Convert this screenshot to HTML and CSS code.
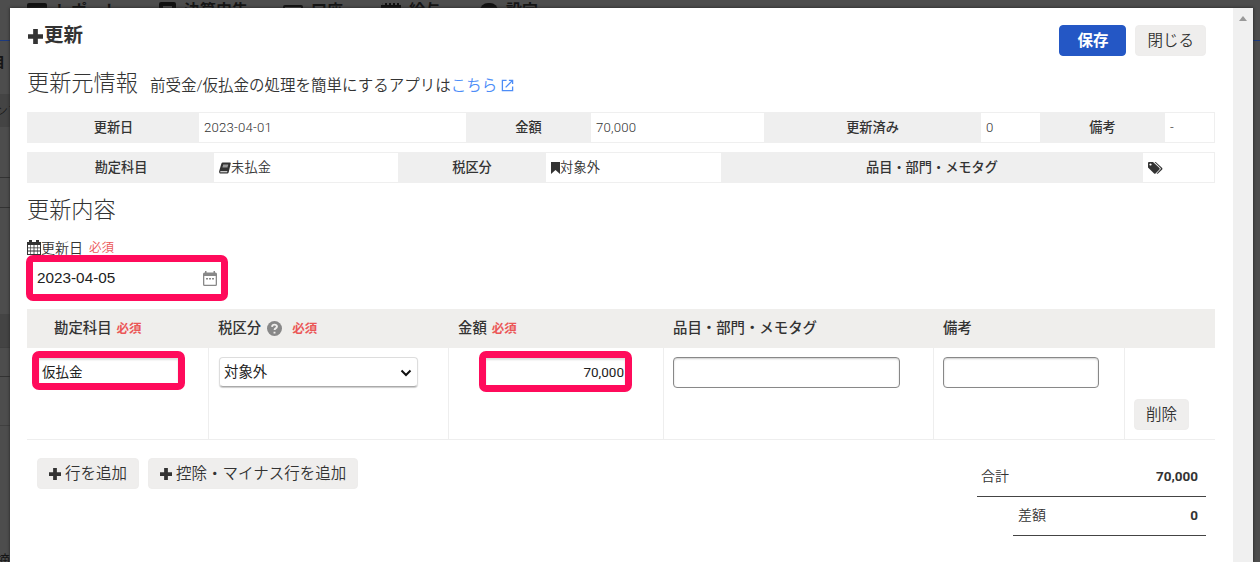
FILE: index.html
```html
<!DOCTYPE html>
<html lang="ja">
<head>
  <meta charset="UTF-8">
  <meta name="viewport" content="width=device-width, initial-scale=1.0">
  <title>更新</title>
  <link rel="stylesheet" href="styles.css">
</head>
<body>

<!-- Shared icons -->
<svg class="sprite" aria-hidden="true">
  <symbol id="plus" viewBox="0 0 16 16"><path d="M5.500 0h5v5.500H16v5h-5.500V16h-5v-5.500H0v-5h5.500z"/></symbol>
  <symbol id="calendar" viewBox="0 0 14 15"><path fill-rule="evenodd" d="M0 2h2V0h3v2h4V0h3v2h2v13H0zM1 5v2.400h2.400V5zm3 0v2.400h2.600V5zm3.400 0v2.400H10V5zm3.200 0v2.400H13V5zM1 8.200v2.400h2.400V8.200zm3 0v2.400h2.600V8.200zm3.400 0v2.400H10V8.200zm3.200 0v2.400H13V8.200zM1 11.400V14h2.400v-2.600zm3 0V14h2.600v-2.600zm3.400 0V14H10v-2.600zm3.200 0V14H13v-2.600z"/></symbol>
</svg>

<!-- Page behind the modal -->
<div class="page">
  <nav class="page-nav">
    <span class="nav-item nav-report"><i class="nav-icon"></i>レポート</span>
    <span class="nav-item nav-close"><i class="nav-icon book"></i>決算申告</span>
    <span class="nav-item nav-account"><i class="nav-icon outline"></i>口座</span>
    <span class="nav-item nav-salary"><i class="nav-icon receipt"></i>給与</span>
    <span class="nav-item nav-setting"><i class="nav-icon gear"></i>設定</span>
  </nav>
  <div class="page-side">
    <p class="side-title">目</p>
    <p class="side-row side-staff">ンプ</p>
    <p class="side-row side-line"></p>
    <p class="side-row side-gap"></p>
    <p class="side-row side-shade"></p>
    <p class="side-row side-line2"></p>
    <p class="side-row side-line3"></p>
    <p class="side-end">摘</p>
  </div>
</div>

<div class="modal">
  <div class="modal-body">
    <header class="modal-header">
      <h1><svg class="icon-title"><use href="#plus"/></svg>更新</h1>
      <div class="header-buttons">
        <button class="btn btn-primary">保存</button>
        <button class="btn">閉じる</button>
      </div>
    </header>

    <h2 class="source-title">更新元情報
      <small>前受金/仮払金の処理を簡単にするアプリは<a>こちら<svg class="icon-link" viewBox="0 0 14 14"><path d="M6 1.500H1.500v11h11V8M8.500 1.500h4v4M12.500 1.500L5 9"/></svg></a></small>
    </h2>

    <dl class="info info-first">
      <dt>更新日</dt><dd>2023-04-01</dd>
      <dt>金額</dt><dd>70,000</dd>
      <dt>更新済み</dt><dd>0</dd>
      <dt>備考</dt><dd>-</dd>
    </dl>
    <dl class="info info-second">
      <dt>勘定科目</dt>
      <dd><svg class="icon-book" viewBox="0 0 13 12"><path fill-rule="evenodd" d="M4 0h8q1 0 .7 1L10.500 10.500Q10 12 9 12H1Q-.3 11 .3 9L2.500 1.500Q3 0 4 0zM4.500 2.500L4.300 3.300h5.500L10 2.500zM4 4.500l-.2.800h5.500l.2-.800zM1.500 9.500L1.300 10.500h7.500l.3-1z"/></svg>未払金</dd>
      <dt>税区分</dt>
      <dd><svg class="icon-bookmark" viewBox="0 0 9 12"><path d="M0 0h9v12L4.500 8 0 12z"/></svg>対象外</dd>
      <dt>品目・部門・メモタグ</dt>
      <dd><svg class="icon-tags" viewBox="0 0 15 12"><path fill-rule="evenodd" d="M0 1q0-1 1-1h4l6.500 6q.5.700 0 1.400L7.500 11.500q-.7.500-1.400 0L0 5.500zM2.500 1.400a1.100 1.100 0 1 0 .01 0z"/><path d="M6.500 0h1.200l6.500 6q.5.700 0 1.400L10 11.500q-.7.500-1.400 0l4-4.200q.4-.600 0-1.300z"/></svg></dd>
    </dl>

    <h2 class="content-title">更新内容</h2>

    <label class="date-label"><svg class="icon-calendar"><use href="#calendar"/></svg>更新日 <em>必須</em></label>
    <div class="field highlight date-field">
      <span>2023-04-05</span>
      <svg class="icon-picker" viewBox="0 0 14 15"><path fill-rule="evenodd" d="M2 0h1.500v1.500h7V0H12v1.500h.5Q14 1.500 14 3v10.500Q14 15 12.500 15h-11Q0 15 0 13.500V3q0-1.500 1.500-1.500H2zM1.300 5v8.200q0 .5.500.5h10.400q.5 0 .5-.5V5z"/><path d="M3 7h2v1.500H3zM6 7h2v1.500H6zM9 7h2v1.500H9z"/></svg>
    </div>

    <div class="lines">
      <div class="lines-head">
        <div class="head-account">勘定科目<em>必須</em></div>
        <div>税区分<svg class="icon-help" viewBox="0 0 14 14"><circle cx="7" cy="7" r="7"/><path d="M4.700 5.400q.2-2 2.300-2t2.300 1.800q0 1-1.200 1.700-1 .6-1 1.500M7 10v1.600"/></svg><em class="tax-required">必須</em></div>
        <div>金額<em>必須</em></div>
        <div>品目・部門・メモタグ</div>
        <div>備考</div>
        <div></div>
      </div>
      <div class="lines-row">
        <div class="cell-account"><div class="field highlight account-field">仮払金</div></div>
        <div class="cell-tax"><div class="select">対象外<svg class="icon-chevron" viewBox="0 0 12 8"><path d="M1.500 1.500L6 6l4.500-4.500"/></svg></div></div>
        <div class="cell-amount"><div class="field highlight amount-field">70,000</div></div>
        <div><div class="input"></div></div>
        <div><div class="input memo"></div></div>
        <div class="cell-delete"><button class="btn">削除</button></div>
      </div>
    </div>

    <footer class="modal-footer">
      <div class="add-buttons">
        <button class="btn"><svg class="icon-plus"><use href="#plus"/></svg>行を追加</button>
        <button class="btn"><svg class="icon-plus"><use href="#plus"/></svg>控除・マイナス行を追加</button>
      </div>
      <div class="totals">
        <div class="total"><span>合計</span><b>70,000</b></div>
        <div class="total diff"><span>差額</span><b>0</b></div>
      </div>
    </footer>
  </div>
  <div class="scrollbar"><i></i></div>
</div>

</body>
</html>
```
FILE: styles.css
```css
* {
  box-sizing: border-box;
}

body {
  margin: 0;
  height: 562px;
  overflow: hidden;
  background: #4d4d4d;
  color: #333;
  font: 14px/20px Roboto, "Noto Sans CJK JP", sans-serif;
}

h1, h2, p, dl, dd {
  margin: 0;
}

em {
  color: #eb5757;
  font-style: normal;
  font-size: 12.500px;
}

svg {
  fill: #333;
}

.sprite {
  display: none;
}

/* Dimmed page */
.page {
  position: absolute;
  inset: 0;
  overflow: hidden;
  color: #151515;
}

.page-nav {
  height: 41px;
  border-bottom: 1px solid #1c3a80;
}

.nav-item {
  position: absolute;
  top: 1px;
  display: flex;
  gap: 8px;
  font-size: 16px;
  font-weight: bold;
}

.nav-report { left: 27px; }
.nav-close { left: 159px; }
.nav-account { left: 283px; }
.nav-salary { left: 381px; }
.nav-setting { left: 480px; }

.nav-icon {
  width: 20px;
  height: 16px;
  margin-top: 2px;
  border-radius: 2px;
  background: #111;
}

.nav-icon.book {
  width: 17px;
  margin-top: 1px;
  background: none;
  border: 4px solid #111;
}

.nav-icon.outline {
  margin-top: 4px;
  background: none;
  border: 2px solid #111;
}

.nav-icon.receipt {
  border-top: 2px dotted #4d4d4d;
}

.nav-icon.gear {
  border-radius: 9px;
  width: 18px;
}

.page-side {
  width: 10px;
  display: flex;
  flex-direction: column;
}

.page-side p {
  display: flex;
  justify-content: flex-end;
  flex-shrink: 0;
  white-space: nowrap;
}

.page-side .side-title { height: 53px; padding-top: 11px; width: 5px; font-weight: bold; }
.page-side .side-staff { height: 84px; padding-top: 7px; justify-content: flex-start; background: linear-gradient(#444 33px, #4d4d4d 33px); border-bottom: 1px solid #333; font-size: 13px; font-weight: 300; text-indent: -5px; }
.page-side .side-line { height: 30px; border-bottom: 1px solid #333; }
.page-side .side-gap { height: 106px; }
.page-side .side-shade { height: 34px; background: #444; border-bottom: 1px solid #404040; }
.page-side .side-line2 { height: 29px; border-bottom: 1px solid #333; }
.page-side .side-line3 { height: 49px; border-bottom: 1px solid #404040; }
.page-side .side-end { height: 136px; padding-top: 124px; }

/* Modal */
.modal {
  position: absolute;
  left: 10px;
  top: 8px;
  width: 1243px;
  height: 554px;
  display: flex;
  background: #fff;
  box-shadow: 0 0 3px #222;
}

.modal-body {
  width: 1223px;
  padding: 0 18px 0 17px;
}

.scrollbar {
  width: 20px;
  padding: 8px 0 0 6px;
  background: #f0f0f0;
}

.scrollbar i {
  display: block;
  width: 0;
  border: 4px solid transparent;
  border-top: 0;
  border-bottom: 5px solid #999;
}

.modal-header {
  height: 63px;
  padding: 17px 9px 0 0;
  display: flex;
  justify-content: space-between;
  align-items: flex-start;
}

h1 {
  display: flex;
  align-items: center;
  padding-top: 1px;
  font-size: 19.500px;
  line-height: 20px;
}

.icon-title {
  width: 15px;
  height: 15px;
  margin: 0 1px;
}

.header-buttons {
  display: flex;
  gap: 9px;
}

.btn {
  height: 31px;
  padding: 0 11px;
  border: 1px solid #eeedec;
  border-radius: 4px;
  background: #efeeed;
  color: #333;
  font: 350 15.500px/20px Roboto, "Noto Sans CJK JP", sans-serif;
  white-space: nowrap;
}

.btn-primary {
  width: 67px;
  border-color: #2458c5;
  background: #2457c5;
  color: #fff;
  font-weight: bold;
}

h2 {
  font-size: 22.200px;
  font-weight: 300;
  line-height: 24px;
}

.source-title {
  height: 41px;
  display: flex;
  align-items: baseline;
  gap: 12px;
}

.source-title small {
  font-size: 15.500px;
  font-weight: 350;
}

.source-title a {
  color: #4d8df7;
}

.icon-link {
  width: 13px;
  height: 13px;
  margin-left: 4px;
  vertical-align: -1px;
  fill: none;
  stroke: #4d8df7;
  stroke-width: 1.400;
}

.info {
  display: grid;
  height: 31px;
  margin-bottom: 9px;
  border: 1px solid #efefef;
  line-height: 29px;
  font-size: 13.200px;
}

.info-first { grid-template-columns: 171px 267px 125px 173px 217px 59px 125px 1fr; }
.info-second { grid-template-columns: 186px 184px 148px 175px 422px 1fr; }

.info dt {
  background: #efefef;
  text-align: center;
  font-weight: 500;
}

.info dd {
  padding-left: 5px;
  font-weight: 350;
  letter-spacing: .2px;
}

.icon-book, .icon-bookmark, .icon-tags {
  width: 12px;
  height: 12px;
  vertical-align: -2px;
}

.icon-bookmark { width: 9px; }
.icon-tags { width: 15px; }

.content-title {
  padding-top: 6px;
  height: 48px;
}

.date-label {
  display: flex;
  align-items: center;
  height: 15px;
  font-weight: 350;
}

.date-label em {
  margin-left: 6px;
}

.icon-calendar {
  width: 14px;
  height: 15px;
}

.field {
  display: flex;
  align-items: center;
  background: #fff;
  color: #222;
}

.highlight {
  border: 7px solid #ff0b5b;
  border-radius: 7px;
}

.date-field {
  width: 202px;
  height: 46px;
  margin: 0 0 8px -1px;
  padding: 0 4px 0 4px;
  justify-content: space-between;
  font-family: "Liberation Sans", sans-serif;
  font-size: 15.300px;
}

.icon-picker {
  width: 14px;
  height: 15px;
  fill: #888;
}

/* Detail lines */
.lines-head, .lines-row {
  display: grid;
  grid-template-columns: 182px 240px 215px 270px 191px 1fr;
}

.lines-head {
  height: 39px;
  background: #efeeec;
  font-size: 14.400px;
  font-weight: 500;
  line-height: 37px;
}

.lines-head > div {
  display: flex;
  align-items: center;
  padding-left: 9px;
}

.lines-head .head-account {
  padding-left: 27px;
}

.lines-head em {
  margin-left: 5px;
  font-weight: bold;
}

.lines-head .tax-required {
  margin-left: 10px;
}

.icon-help {
  width: 15px;
  height: 15px;
  margin-left: 6px;
  fill: #888;
}

.icon-help path {
  fill: none;
  stroke: #efeeec;
  stroke-width: 1.800;
}

.lines-row {
  height: 92px;
  border-bottom: 1px solid #eee;
}

.lines-row > div {
  padding: 9px 0 0 9px;
  border-right: 1px solid #eee;
}

.lines-row > div:last-child {
  border-right: 0;
}

.lines-row .cell-account {
  padding: 3px 0 0 5px;
}

.lines-row .cell-tax {
  padding-left: 10px;
}

.lines-row .cell-amount {
  padding: 3px 0 0 30px;
}

.lines-row .cell-delete {
  padding-top: 51px;
}

.account-field, .amount-field {
  width: 153px;
  height: 39px;
  padding: 2px 3px 0;
  box-shadow: inset 0 2px 2px #ddd;
  font-size: 13.500px;
}

.amount-field {
  height: 41px;
  padding: 0 1px 0 3px;
  justify-content: flex-end;
}

.select {
  width: 199px;
  height: 30px;
  padding: 2px 5px 0 4px;
  display: flex;
  align-items: center;
  justify-content: space-between;
  border: 1px solid #ddd;
  border-bottom: 1px solid #aaa;
  border-radius: 4px;
  box-shadow: 0 1px 1px #ccc;
  color: #222;
  font-size: 14.400px;
}

.icon-chevron {
  width: 12px;
  height: 8px;
  fill: none;
  stroke: #111;
  stroke-width: 2;
}

.input {
  width: 227px;
  height: 31px;
  border: 1px solid #888;
  border-radius: 4px;
  box-shadow: inset 0 1px 2px #ccc;
}

.input.memo {
  width: 156px;
}

/* Footer */
.modal-footer {
  display: flex;
  justify-content: space-between;
}

.add-buttons {
  display: flex;
  gap: 9px;
  padding: 18px 0 0 10px;
}

.icon-plus {
  width: 12px;
  height: 12px;
  margin-right: 4px;
  vertical-align: -1px;
}

.totals {
  width: 238px;
  padding: 18px 9px 0 0;
}

.total {
  height: 39px;
  padding: 0 8px 2px 4px;
  display: flex;
  justify-content: space-between;
  align-items: center;
  border-bottom: 1px solid #444;
  font-weight: 350;
}

.total b {
  font-size: 13.500px;
}

.total.diff {
  margin-left: 36px;
  padding-left: 5px;
}
```
